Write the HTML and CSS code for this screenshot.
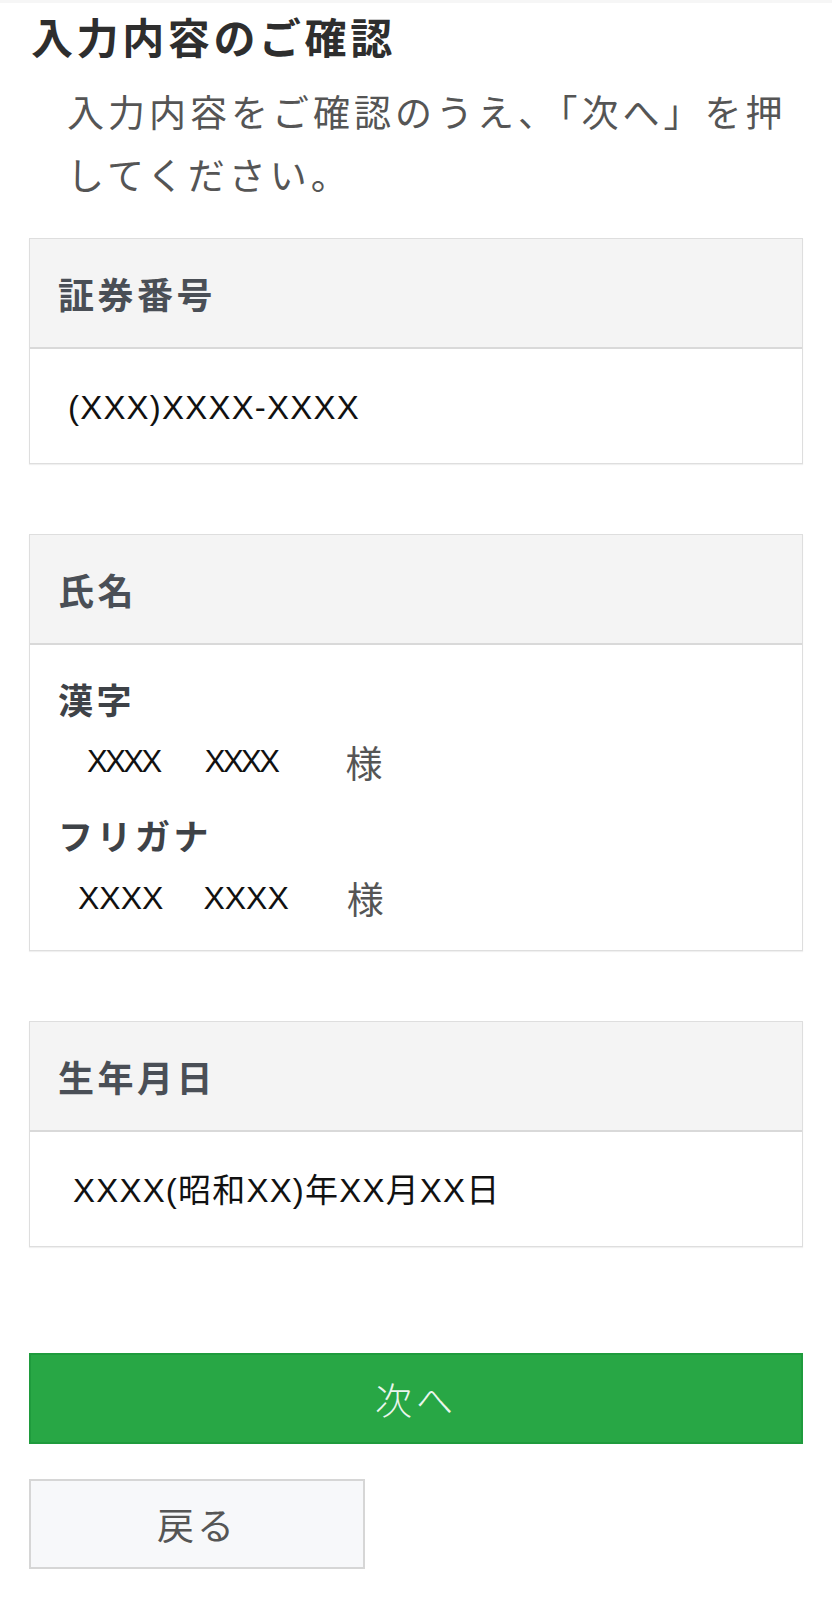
FILE: index.html
```html
<!DOCTYPE html>
<html lang="ja">
<head>
<meta charset="utf-8">
<title>入力内容のご確認</title>
<link rel="stylesheet" href="styles.css">
</head>
<body>
<main class="page">
  <h1 class="title">入力内容のご確認</h1>
  <p class="lead">入力内容をご確認のうえ、「次へ」を押してください。</p>

  <section class="card">
    <div class="card-head">証券番号</div>
    <div class="card-body card-body--single">
      <span class="value">(XXX)XXXX-XXXX</span>
    </div>
  </section>

  <section class="card">
    <div class="card-head">氏名</div>
    <div class="card-body card-body--name">
      <div class="sub-label">漢字</div>
      <div class="name-row name-row--kanji">
        <span class="nm">XXXX</span><span class="nm">XXXX</span><span class="sama">様</span>
      </div>
      <div class="sub-label sub-label--second">フリガナ</div>
      <div class="name-row name-row--kana">
        <span class="nm">XXXX</span><span class="nm">XXXX</span><span class="sama">様</span>
      </div>
    </div>
  </section>

  <section class="card">
    <div class="card-head">生年月日</div>
    <div class="card-body card-body--single">
      <span class="value value--date">XXXX(昭和XX)年XX月XX日</span>
    </div>
  </section>

  <div class="actions">
    <button class="btn btn-next" type="button">次へ</button>
    <button class="btn btn-back" type="button">戻る</button>
  </div>
</main>
</body>
</html>
```
FILE: styles.css
```css
* {
  box-sizing: border-box;
}

html, body {
  margin: 0;
  padding: 0;
  background: #ffffff;
}

body {
  font-family: "Noto Sans CJK JP", "Noto Sans", sans-serif;
  color: #333333;
  border-top: 3px solid #f6f6f6;
}

.page {
  padding: 5px 29px 40px 29px;
  display: flex;
  flex-direction: column;
}

.title {
  margin: 0;
  padding-left: 2px;
  font-size: 42px;
  line-height: 56px;
  font-weight: 700;
  letter-spacing: 3.6px;
  color: #2e2e2e;
}

.lead {
  margin: 16px -12px 0 0;
  padding-left: 38px;
  font-size: 37px;
  line-height: 63px;
  letter-spacing: 4px;
  color: #555555;
}

.card {
  margin-top: 32px;
  border: 1px solid #dedede;
  box-shadow: 0 1px 1px rgba(0, 0, 0, 0.06);
  background: #ffffff;
}

.card + .card {
  margin-top: 70px;
}

.card-head {
  height: 110px;
  display: flex;
  align-items: center;
  padding: 0 28px;
  background: #f4f4f4;
  border-bottom: 2px solid #d9d9d9;
  font-size: 36px;
  font-weight: 700;
  letter-spacing: 3.5px;
  color: #4a4f56;
}

.card-body--single {
  padding: 39px 28px 31px 28px;
  line-height: 40px;
}

.value {
  font-family: "Liberation Sans", "Noto Sans CJK JP", sans-serif;
  font-size: 33px;
  letter-spacing: 1.2px;
  color: #111111;
  padding-left: 10px;
}

.value--date {
  padding-left: 15px;
}

.card-body--name {
  padding: 22px 28px 21px 28px;
}

.sub-label {
  font-size: 35px;
  line-height: 64px;
  font-weight: 700;
  letter-spacing: 3.5px;
  color: #3e4247;
}

.sub-label--second {
  margin-top: 10px;
}

.name-row {
  display: flex;
  align-items: center;
  height: 62px;
}

.nm {
  font-family: "Liberation Sans", sans-serif;
  font-size: 32px;
  color: #111111;
}

.name-row--kanji .nm {
  letter-spacing: -2.5px;
  font-size: 31px;
}

.name-row--kanji .nm:first-child {
  margin-left: 29px;
}

.name-row--kanji .nm + .nm {
  margin-left: 45px;
}

.name-row--kanji .sama {
  margin-left: 68px;
}

.name-row--kana .nm:first-child {
  margin-left: 20px;
}

.name-row--kana .nm + .nm {
  margin-left: 40px;
}

.name-row--kana .sama {
  margin-left: 58px;
}

.sama {
  font-size: 37px;
  color: #555555;
  letter-spacing: 2px;
}

.actions {
  margin-top: 106px;
  display: flex;
  flex-direction: column;
  align-items: flex-start;
}

.btn {
  font-family: "Noto Sans CJK JP", sans-serif;
  font-weight: 400;
  cursor: pointer;
  padding: 0;
}

.btn-next {
  width: 100%;
  height: 91px;
  background: #28a745;
  border: 2px solid #1f9b3d;
  color: #eaf6ed;
  font-size: 37px;
  letter-spacing: 4px;
  font-weight: 300;
}

.btn-back {
  margin-top: 35px;
  width: 336px;
  height: 90px;
  background: #f7f8fa;
  border: 2px solid #d6d6d6;
  color: #555555;
  font-size: 37px;
  letter-spacing: 3px;
}
```
